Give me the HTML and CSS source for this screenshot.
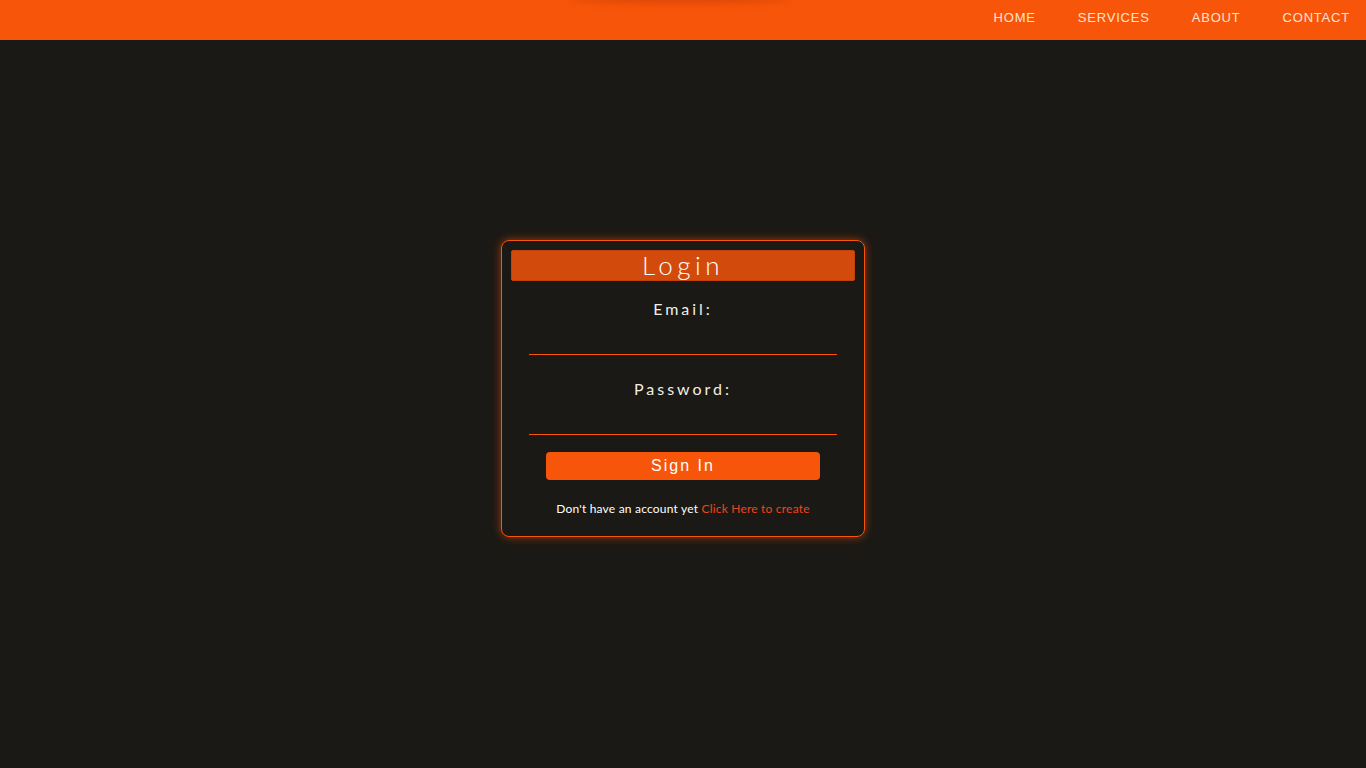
FILE: index.html
```html
<!DOCTYPE html>
<html lang="en">
<head>
<meta charset="utf-8">
<title>Login</title>
<link rel="stylesheet" href="styles.css">
</head>
<body>
<header class="navbar">
  <div class="nav-shadow"></div>
  <nav class="nav-links">
    <a href="#" class="nav-link">HOME</a>
    <a href="#" class="nav-link">SERVICES</a>
    <a href="#" class="nav-link">ABOUT</a>
    <a href="#" class="nav-link">CONTACT</a>
  </nav>
</header>
<main class="main">
  <form class="card">
    <h1 class="card-title">Login</h1>
    <label class="field-label" for="email">Email:</label>
    <input class="field-input" id="email" type="email">
    <label class="field-label field-label-second" for="password">Password:</label>
    <input class="field-input" id="password" type="password">
    <button type="button" class="btn">Sign In</button>
    <p class="signup">Don't have an account yet <a href="#" class="signup-link">Click Here to create</a></p>
  </form>
</main>
</body>
</html>
```

FILE: styles.css
```css
* { box-sizing: border-box; }
html, body { margin: 0; padding: 0; }
body {
  background: #1b1915;
  font-family: Lato, "Open Sans", "Liberation Sans", sans-serif;
  color: #fff;
  min-height: 768px;
}
.navbar {
  height: 40px;
  background: #f75509;
  display: flex;
  justify-content: flex-end;
  align-items: flex-start;
  position: relative;
}
.nav-shadow {
  position: absolute;
  left: 570px;
  top: -10px;
  width: 220px;
  height: 10px;
  box-shadow: 0 2px 8px rgba(150, 40, 0, 0.35);
  border-radius: 50%;
}
.nav-links {
  display: flex;
  align-items: center;
  gap: 42px;
  padding: 10px 16px 0 0;
}
.nav-link {
  color: #fde3d2;
  text-decoration: none;
  font-family: "Liberation Sans", Arial, sans-serif;
  font-size: 13px;
  line-height: 15px;
  letter-spacing: 0.8px;
}
.main {
  display: flex;
  justify-content: center;
  padding-top: 200px;
}
.card {
  width: 364px;
  border: 1px solid #f75509;
  border-radius: 8px;
  box-shadow: 0 0 9px rgba(247, 85, 9, 0.6);
  padding: 9px 9px 19px;
  display: flex;
  flex-direction: column;
  align-items: center;
}
.card-title {
  margin: 0;
  width: 344px;
  height: 31px;
  background: #d34b0c;
  border: 1px solid #c14208;
  border-radius: 2px;
  font-weight: 300;
  font-size: 26px;
  line-height: 28px;
  letter-spacing: 4.5px;
  text-align: center;
  color: #fff;
}
.field-label {
  margin-top: 18px;
  font-size: 16px;
  font-weight: 400;
  line-height: 20px;
  letter-spacing: 3px;
  color: #f2eee6;
}
.field-label-second { margin-top: 24px; }
.field-input {
  margin-top: 6px;
  width: 308px;
  height: 30px;
  background: transparent;
  border: none;
  border-bottom: 1px solid #f75509;
  outline: none;
  color: #fff;
}
.btn {
  margin-top: 17px;
  width: 274px;
  height: 28px;
  background: #f75509;
  border: none;
  border-radius: 4px;
  color: #fff;
  font-family: "Liberation Sans", Arial, sans-serif;
  font-size: 16px;
  letter-spacing: 2px;
  cursor: pointer;
}
.signup {
  margin: 21px 0 0;
  font-size: 12px;
  line-height: 16px;
  letter-spacing: 0.2px;
  color: #fff;
}
.signup-link {
  color: #f2431c;
  text-decoration: none;
}
```
